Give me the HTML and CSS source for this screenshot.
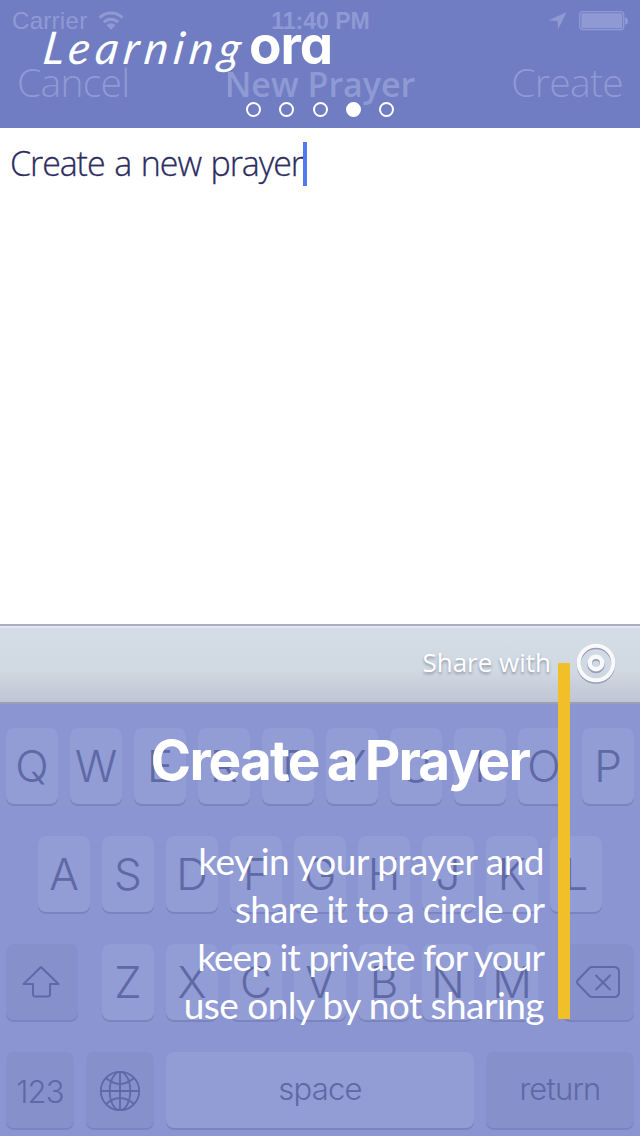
FILE: index.html
```html
<!DOCTYPE html>
<html lang="en">
<head>
<meta charset="utf-8">
<title>Learning ora</title>
<link rel="stylesheet" href="styles.css">
</head>
<body>
<main class="screen">
  <header class="header">
    <div class="status">
      <div class="status-left"><span class="carrier">Carrier</span>
        <svg class="wifi" width="26" height="20" viewBox="0 0 26 20"><g fill="none" stroke="currentColor" stroke-width="3"><path d="M1.5 6.8a16.300 16.300 0 0 1 23 0"/><path d="M5.800 11.300a10.300 10.300 0 0 1 14.400 0"/></g><path d="M8.500 14.200a6.300 6.300 0 0 1 9 0L13 18.800z" fill="currentColor"/></svg>
      </div>
      <span class="time">11:40 PM</span>
      <div class="status-right">
        <svg width="20" height="20" viewBox="0 0 20 20"><path d="M18.500 1L.500 9.500l9 .500.500 8.500z" fill="currentColor"/></svg>
        <svg class="battery" width="50" height="20" viewBox="0 0 50 20"><rect x=".7" y=".7" width="44" height="18" rx="3" fill="none" stroke="currentColor" stroke-width="1.300"/><rect x="2.300" y="2.300" width="41" height="15" rx="1.500" fill="currentColor"/><path d="M46 6.500q3 0 3 3.500t-3 3.500z" fill="currentColor"/></svg>
      </div>
    </div>
    <nav class="navbar"><span class="cancel">Cancel</span><span class="nav-title">New Prayer</span><span class="create">Create</span></nav>
  </header>
  <section class="editor"><span class="entry">Create a new prayer</span><span class="caret"></span></section>
  <section class="share">
    <span class="share-label">Share with</span>
    <svg class="target" width="42" height="44" viewBox="0 0 42 44"><g fill="none" stroke="#979db5" transform="translate(0 1.500)"><circle cx="21" cy="21" r="17.300" stroke-width="4"/><circle cx="21" cy="21" r="6.200" stroke-width="5"/></g><g fill="none" stroke="#f7f9fb"><circle cx="21" cy="21" r="17.300" stroke-width="4"/><circle cx="21" cy="21" r="6.200" stroke-width="4.500"/></g></svg>
  </section>
  <section class="keyboard">
    <div class="keys"><span class="key">Q</span><span class="key">W</span><span class="key">E</span><span class="key">R</span><span class="key">T</span><span class="key">Y</span><span class="key">U</span><span class="key">I</span><span class="key">O</span><span class="key">P</span></div>
    <div class="keys"><span class="key">A</span><span class="key">S</span><span class="key">D</span><span class="key">F</span><span class="key">G</span><span class="key">H</span><span class="key">J</span><span class="key">K</span><span class="key">L</span></div>
    <div class="keys spread">
      <span class="key dark shift"><svg width="40" height="34" viewBox="0 0 40 34"><path d="M19 2L36.500 19H28v10q0 2.500-2.500 2.500h-12Q11 31.500 11 29V19H1.500z" fill="none" stroke="currentColor" stroke-width="2" stroke-linejoin="round"/></svg></span>
      <div class="letters"><span class="key">Z</span><span class="key">X</span><span class="key">C</span><span class="key">V</span><span class="key">B</span><span class="key">N</span><span class="key">M</span></div>
      <span class="key dark delete"><svg width="46" height="34" viewBox="0 0 46 34"><path d="M17 2h22q5 0 5 5v20q0 5-5 5H17q-1.500 0-2.500-1L2.500 18.500q-1-1.500 0-3L14.500 3q1-1 2.500-1zM20.500 10l15 15m0-15l-15 15" fill="none" stroke="currentColor" stroke-width="2"/></svg></span>
    </div>
    <div class="keys spread">
      <span class="key dark wide numeric">123</span>
      <span class="key dark wide"><svg width="42" height="42" viewBox="0 0 42 42"><g fill="none" stroke="currentColor" stroke-width="1.800"><circle cx="21" cy="22" r="19.200"/><ellipse cx="21" cy="22" rx="10.300" ry="19.200"/><path d="M21 3v38M2 22h38M7 9q14 12 28 0M7 35q14-12 28 0"/></g></svg></span>
      <span class="key space">space</span>
      <span class="key dark return">return</span>
    </div>
  </section>
  <aside class="overlay">
    <div class="logo"><span class="logo-script">Learning</span><span class="logo-name">ora</span></div>
    <div class="dots"><i class="dot"></i><i class="dot"></i><i class="dot"></i><i class="dot active"></i><i class="dot"></i></div>
    <div class="tip">
      <div class="tip-text">
        <h1 class="tip-title">Create a Prayer</h1>
        <p class="tip-body"><span class="l1">key in your prayer and</span><span class="l2">share it to a circle or</span><span class="l3">keep it private for your</span><span class="l4">use only by not sharing</span></p>
      </div>
      <div class="tip-bar"></div>
    </div>
  </aside>
</main>
</body>
</html>
```
FILE: styles.css
```css
* { box-sizing: border-box; }
body { margin: 0; }
svg { display: block; flex: none; }
.screen { position: relative; width: 640px; height: 1136px; overflow: hidden; display: flex; flex-direction: column; background: #fff; font-family: "Open Sans", sans-serif; white-space: nowrap; }
.header { height: 128px; background: #707dc3; color: #8f9ad4; }
.status { display: grid; grid-template-columns: 1fr auto 1fr; height: 40px; padding: 2px 11px 0 12px; align-items: center; font-family: "Liberation Sans", Arial, sans-serif; }
.status-left, .status-right { display: flex; align-items: center; gap: 11px; }
.status-right { justify-content: flex-end; }
.carrier { font-size: 24px; letter-spacing: .3px; }
.time { font-size: 23px; font-weight: 700; }
.navbar { display: grid; grid-template-columns: 1fr auto 1fr; align-items: baseline; padding: 0 17px; height: 88px; line-height: 84px; font-size: 39px; font-weight: 300; letter-spacing: -.7px; }
.nav-title { font-size: 34px; font-weight: 600; letter-spacing: 0; }
.create { text-align: right; }
.editor { height: 496px; padding: 14px 10px; display: flex; }
.entry { font-size: 34px; font-weight: 300; line-height: 43px; letter-spacing: -1.1px; word-spacing: 2px; color: #2d2d5f; -webkit-text-stroke: .3px #2d2d5f; }
.caret { width: 4px; height: 44px; background: #527af0; }
.share { height: 80px; border-top: 2px solid #a9aec3; border-bottom: 2px solid #98a0b5; box-shadow: inset 0 2px #e3e8ef; background: linear-gradient(#d5dde7, #d0d8e2 60%, #bfc5d3); display: flex; justify-content: flex-end; align-items: center; gap: 24px; padding-right: 23px; }
.share-label { padding-bottom: 4px; color: #fff; font-size: 26px; font-weight: 500; text-shadow: 0 2px 3px #8b93a5; }
.keyboard { height: 432px; padding: 24px 6px 0; background: #8a95d1; color: #5e69a5; font-family: Inter, sans-serif; display: flex; flex-direction: column; gap: 32px; }
.keys, .letters { display: flex; justify-content: center; gap: 12px; }
.spread { justify-content: space-between; }
.key { width: 52px; height: 76px; border-radius: 8px; background: #929cd5; box-shadow: 0 2px #7a85bf; font-size: 44px; font-weight: 300; line-height: 76px; display: flex; justify-content: center; align-items: center; }
.dark { background: #8690cb; }
.shift, .delete { width: 72px; }
.wide { width: 68px; }
.space { width: 308px; }
.return { width: 148px; }
.numeric, .space, .return { font-size: 31px; letter-spacing: -.8px; }
.numeric { padding-top: 3px; }
.space, .return { padding-bottom: 3px; }
.overlay { position: absolute; inset: 0; color: #fff; display: flex; flex-direction: column; }
.logo { display: flex; align-items: baseline; height: 102px; padding: 15px 0 0 42px; line-height: 60px; }
.logo-script { width: 207px; font-family: Lato, cursive; font-style: italic; font-size: 45px; letter-spacing: 5.4px; transform: translateX(2px) skewX(-8deg); }
.logo-name { font-family: Inter, sans-serif; font-size: 53px; font-weight: 700; letter-spacing: -1px; font-feature-settings: "cv11"; }
.dots { display: flex; justify-content: center; gap: 18.25px; height: 15px; }
.dot { width: 15px; height: 15px; border: 2px solid #fff; border-radius: 50%; }
.active { background: #fff; }
.tip { display: flex; margin-top: 546px; }
.tip-text { width: 558px; padding-top: 64px; text-align: right; }
.tip-title { margin: 0 29px 44px 0; font-family: Inter, sans-serif; font-size: 55px; font-weight: 700; line-height: 66px; letter-spacing: -1.9px; word-spacing: -3px; }
.tip-body { margin: 0 14px 0 0; display: flex; flex-direction: column; font-family: Lato, sans-serif; font-size: 37px; line-height: 48px; }
.l1 { letter-spacing: -.5px; }
.l2 { letter-spacing: -.87px; }
.l3 { letter-spacing: -.92px; }
.l4 { letter-spacing: -.55px; }
.tip-bar { width: 12px; height: 356px; background: #f1bf28; }
```
